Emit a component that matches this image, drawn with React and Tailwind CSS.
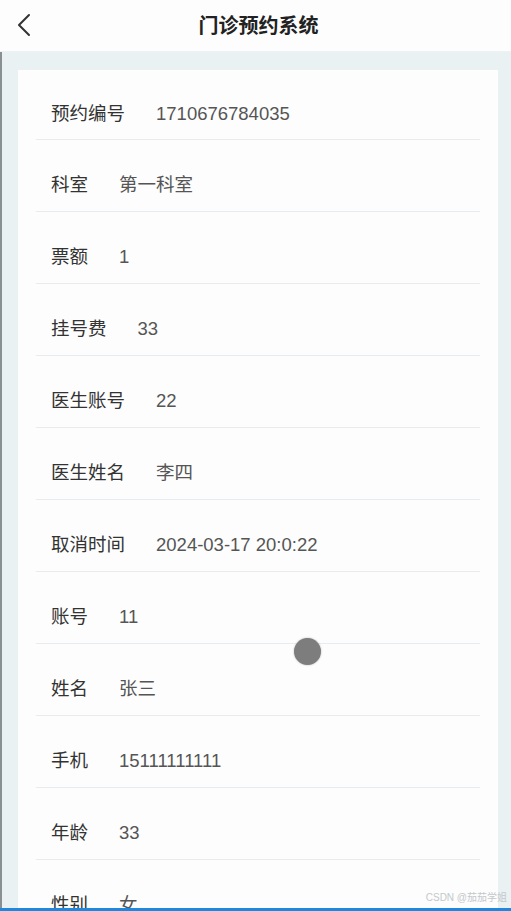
import React from 'react';

const rows = [
  { label: '预约编号', value: '1710676784035' },
  { label: '科室', value: '第一科室' },
  { label: '票额', value: '1' },
  { label: '挂号费', value: '33' },
  { label: '医生账号', value: '22' },
  { label: '医生姓名', value: '李四' },
  { label: '取消时间', value: '2024-03-17 20:0:22' },
  { label: '账号', value: '11' },
  { label: '姓名', value: '张三' },
  { label: '手机', value: '15111111111' },
  { label: '年龄', value: '33' },
  { label: '性别', value: '女' },
];

const App = () => {
  return (
    <div
      className="relative h-[911px] w-[511px] overflow-hidden bg-[#eaf1f3]"
      style={{ fontFamily: '"Liberation Sans", "Noto Sans CJK SC", sans-serif' }}
    >
      {/* Header */}
      <div className="relative flex h-[52px] items-center justify-center bg-[#fdfdfd] border-b border-[#eef2f4]">
        <button className="absolute left-[14px] top-[12px] text-[#333]">
          <svg width="22" height="26" viewBox="0 0 22 26" fill="none">
            <path d="M15 3 L5 13 L15 23" stroke="#333" strokeWidth="2" strokeLinecap="round" strokeLinejoin="round" />
          </svg>
        </button>
        <h1 className="pl-[6px] text-[20px] font-bold text-[#222]">门诊预约系统</h1>
      </div>

      {/* Body */}
      <div className="flex h-[859px] border-l-2 border-[#8a8f92] pl-[16px] pr-[13px] pt-[18px]">
        <div className="flex-1 bg-[#fdfdfd]">
          {rows.map((row, i) => (
            <div
              key={row.label}
              className={`mx-[18px] flex items-center border-b border-[#e9ecee] pl-[15px] pt-[19px] ${i === 0 ? 'h-[70px]' : 'h-[72px]'}`}
            >
              <span className="text-[18.5px] text-[#333]">{row.label}</span>
              <span className="ml-[31px] text-[18.5px] text-[#555]">{row.value}</span>
            </div>
          ))}
        </div>
      </div>

      {/* cursor dot */}
      <div className="absolute left-[294px] top-[638px] h-[27px] w-[27px] rounded-full bg-[#7d7d7d] shadow-[0_0_2px_rgba(0,0,0,0.3)]" />

      {/* watermark */}
      <div className="absolute bottom-[6px] right-[4px] text-[10px] text-[#c4c8cb]">CSDN @茄茄学姐</div>

      {/* bottom bar */}
      <div className="absolute bottom-0 left-0 h-[3px] w-full bg-[#1c88e0]" />
    </div>
  );
};

export default App;
